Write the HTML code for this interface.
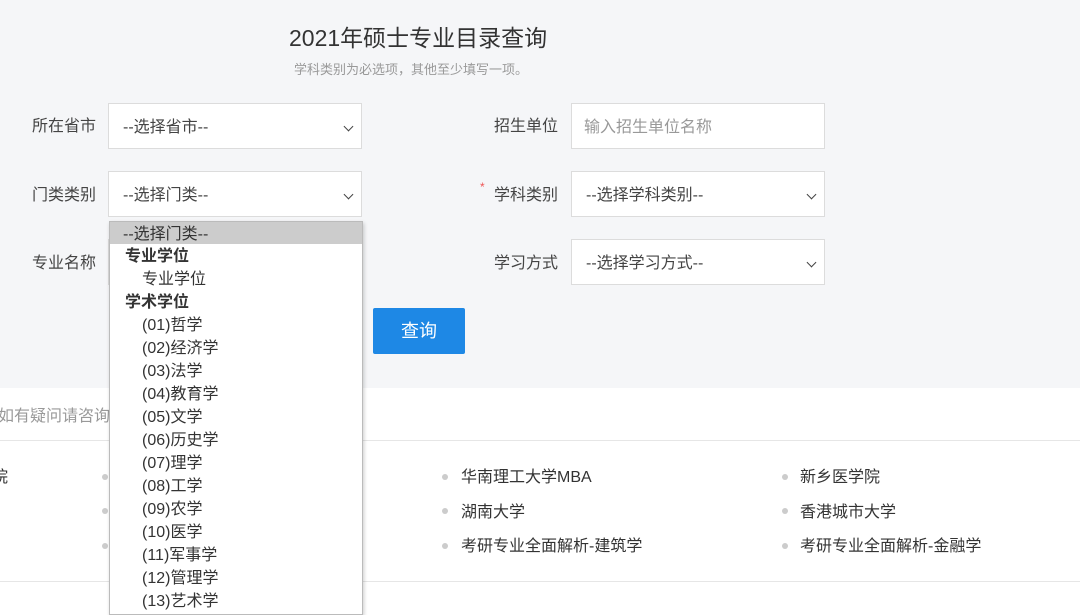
<!DOCTYPE html>
<html><head><meta charset="utf-8"><style>
*{margin:0;padding:0;box-sizing:border-box}
body{width:1080px;height:615px;overflow:hidden;background:#fff;font-family:"Liberation Sans","Noto Sans CJK SC",sans-serif;color:#333;position:relative}
.top{position:absolute;left:0;top:0;width:1080px;height:388px;background:#f5f6f8}
.a{position:absolute;white-space:nowrap}
.lbl{font-size:16px;color:#444}
.sel{position:absolute;width:254px;height:46px;background:#fff;border:1px solid #dcdcdc;font-size:16px;color:#444;padding-left:14px;line-height:48px}
.sel .ar{position:absolute;right:9px;top:19px;width:7px;height:7px;border-right:1.5px solid #444;border-bottom:1.5px solid #444;transform:rotate(45deg)}
.btn{position:absolute;left:373px;top:308px;width:92px;height:46px;background:#1e88e5;border-radius:2px;color:#fff;font-size:18px;text-align:center;line-height:46px}
.hr{position:absolute;left:0;width:1080px;height:1px;background:#e6e6e6}
.li{position:absolute;font-size:16px;color:#333}
.dot{position:absolute;width:6px;height:6px;border-radius:3px;background:#ccc}
.dd{position:absolute;left:109px;top:221px;width:254px;height:394px;background:#fff;border:1px solid #bbb;box-shadow:1px 2px 4px rgba(0,0,0,.2);font-size:16px;color:#333;overflow:hidden}
.dd div{height:23px;line-height:26px;padding-left:14px;white-space:nowrap}
.dd .g{font-weight:bold;padding-left:15px}
.dd .i{padding-left:32px}
</style></head><body>
<div class="top"></div>
<div class="a" style="left:289px;top:19px;font-size:23px;color:#333">2021年硕士专业目录查询</div>
<div class="a" style="left:294px;top:59px;font-size:13px;color:#999">学科类别为必选项，其他至少填写一项。</div>

<div class="a lbl" style="left:32px;top:112px">所在省市</div>
<div class="sel" style="left:108px;top:103px">--选择省市--<span class="ar"></span></div>
<div class="a lbl" style="left:494px;top:112px">招生单位</div>
<div class="sel" style="left:571px;top:103px;color:#999;padding-left:12px">输入招生单位名称</div>

<div class="a lbl" style="left:32px;top:181px">门类类别</div>
<div class="sel" style="left:108px;top:171px">--选择门类--<span class="ar"></span></div>
<div class="a" style="left:480px;top:180px;color:#e55;font-size:12px">*</div>
<div class="a lbl" style="left:494px;top:181px">学科类别</div>
<div class="sel" style="left:571px;top:171px">--选择学科类别--<span class="ar"></span></div>

<div class="a lbl" style="left:32px;top:249px">专业名称</div>
<div class="sel" style="left:108px;top:239px"></div>
<div class="a lbl" style="left:494px;top:249px">学习方式</div>
<div class="sel" style="left:571px;top:239px">--选择学习方式--<span class="ar"></span></div>

<div class="btn">查询</div>

<div class="a" style="left:-2px;top:402px;font-size:16px;color:#999">如有疑问请咨询</div>
<div class="hr" style="top:440px"></div>
<div class="hr" style="top:581px"></div>

<div class="li" style="left:-8px;top:463px">院</div>
<div class="dot" style="left:102px;top:474px"></div>
<div class="dot" style="left:102px;top:508px"></div>
<div class="dot" style="left:102px;top:543px"></div>

<div class="dot" style="left:442px;top:474px"></div><div class="li" style="left:461px;top:463px">华南理工大学MBA</div>
<div class="dot" style="left:442px;top:508px"></div><div class="li" style="left:461px;top:498px">湖南大学</div>
<div class="dot" style="left:442px;top:543px"></div><div class="li" style="left:461px;top:532px">考研专业全面解析-建筑学</div>
<div class="dot" style="left:782px;top:474px"></div><div class="li" style="left:800px;top:463px">新乡医学院</div>
<div class="dot" style="left:782px;top:508px"></div><div class="li" style="left:800px;top:498px">香港城市大学</div>
<div class="dot" style="left:782px;top:543px"></div><div class="li" style="left:800px;top:532px">考研专业全面解析-金融学</div>

<div class="dd">
<div style="background:#ccc;height:22px;line-height:25px;padding-left:13px">--选择门类--</div>
<div class="g">专业学位</div>
<div class="i">专业学位</div>
<div class="g">学术学位</div>
<div class="i">(01)哲学</div>
<div class="i">(02)经济学</div>
<div class="i">(03)法学</div>
<div class="i">(04)教育学</div>
<div class="i">(05)文学</div>
<div class="i">(06)历史学</div>
<div class="i">(07)理学</div>
<div class="i">(08)工学</div>
<div class="i">(09)农学</div>
<div class="i">(10)医学</div>
<div class="i">(11)军事学</div>
<div class="i">(12)管理学</div>
<div class="i">(13)艺术学</div>
</div>
</body></html>
